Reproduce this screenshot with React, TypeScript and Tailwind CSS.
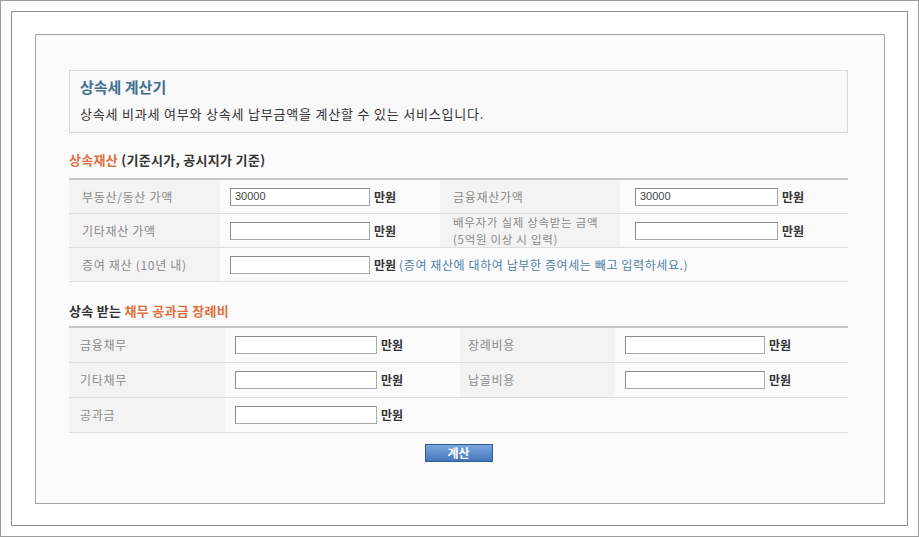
import React from 'react';

const font = { fontFamily: '"Noto Sans CJK KR", "Noto Sans", sans-serif' };

function Field({ value = '', w }: { value?: string; w: string }) {
  return (
    <div
      className={`${w} h-[18px] bg-white border border-[#a9a9a9] border-t-[#8c8c8c] border-l-[#8c8c8c] px-[4px] flex items-center text-[11px] tracking-normal text-[#444] font-['Liberation_Sans',sans-serif]`}
    >
      {value}
    </div>
  );
}

function Unit() {
  return <span className="text-[12px] font-bold text-[#333] ml-[4px] tracking-normal">만원</span>;
}

export default function App() {
  return (
    <div className="w-[919px] h-[537px] bg-white" style={font}>
      <div className="h-full border border-[#9c9c9c] p-[10px]">
        <div className="h-full border border-[#8e8e8e] bg-white pt-[22px] pl-[23px] pr-[22px] pb-[21px]">
          <div className="h-full border border-[#a3a3a3] bg-[#fbfbfb] pt-[35px] pl-[33px] pr-[36px]">
            {/* header */}
            <div className="h-[63px] border border-[#d9d9d9] bg-[#f9f9f9] pl-[10px] pt-[6px]">
              <h1 className="text-[15px] font-bold text-[#3f6f91] leading-[20px]">상속세 계산기</h1>
              <p className="text-[13px] tracking-[0.8px] text-[#333] leading-[18px] mt-[8px]">
                상속세 비과세 여부와 상속세 납부금액을 계산할 수 있는 서비스입니다.
              </p>
            </div>

            {/* section 1 */}
            <div className="mt-[19px] text-[13px] tracking-[0.3px] font-bold leading-[16px] text-[#333]">
              <span className="text-[#e0703f]">상속재산</span> (기준시가, 공시지가 기준)
            </div>
            <div className="mt-[10px] border-t-2 border-[#c6c6c6] text-[12px] tracking-[0.7px] text-[#8a8a8a]">
              <div className="flex h-[34px] border-b border-[#dedede]">
                <div className="w-[151px] bg-[#f3f3f3] pl-[13px] flex items-center">부동산/동산 가액</div>
                <div className="w-[220px] pl-[10px] flex items-center">
                  <Field w="w-[140px]" value="30000" />
                  <Unit />
                </div>
                <div className="w-[180px] bg-[#f3f3f3] pl-[13px] flex items-center">금융재산가액</div>
                <div className="flex-1 pl-[15px] flex items-center">
                  <Field w="w-[143px]" value="30000" />
                  <Unit />
                </div>
              </div>
              <div className="flex h-[34px] border-b border-[#dedede]">
                <div className="w-[151px] bg-[#f3f3f3] pl-[13px] flex items-center">기타재산 가액</div>
                <div className="w-[220px] pl-[10px] flex items-center">
                  <Field w="w-[140px]" />
                  <Unit />
                </div>
                <div className="w-[180px] bg-[#f3f3f3] pl-[13px] flex flex-col justify-center text-[11.5px] leading-[16.5px]">
                  <span>배우자가 실제 상속받는 금액</span>
                  <span>(5억원 이상 시 입력)</span>
                </div>
                <div className="flex-1 pl-[15px] flex items-center">
                  <Field w="w-[143px]" />
                  <Unit />
                </div>
              </div>
              <div className="flex h-[34px] border-b border-[#dedede]">
                <div className="w-[151px] bg-[#f3f3f3] pl-[13px] flex items-center">증여 재산 (10년 내)</div>
                <div className="flex-1 pl-[10px] flex items-center">
                  <Field w="w-[140px]" />
                  <Unit />
                  <span className="ml-[3px] text-[12px] tracking-[0.6px] text-[#4c80a8]">
                    (증여 재산에 대하여 납부한 증여세는 빼고 입력하세요.)
                  </span>
                </div>
              </div>
            </div>

            {/* section 2 */}
            <div className="mt-[21px] text-[13px] tracking-[0.3px] font-bold leading-[16px] text-[#333]">
              상속 받는 <span className="text-[#e0703f]">채무 공과금 장례비</span>
            </div>
            <div className="mt-[7px] border-t-2 border-[#c6c6c6] text-[12px] tracking-[0.7px] text-[#8a8a8a]">
              <div className="flex h-[35px] border-b border-[#dedede]">
                <div className="w-[156px] bg-[#f3f3f3] pl-[11px] flex items-center">금융채무</div>
                <div className="w-[235px] pl-[10px] flex items-center">
                  <Field w="w-[142px]" />
                  <Unit />
                </div>
                <div className="w-[155px] bg-[#f3f3f3] pl-[8px] flex items-center">장례비용</div>
                <div className="flex-1 pl-[10px] flex items-center">
                  <Field w="w-[140px]" />
                  <Unit />
                </div>
              </div>
              <div className="flex h-[35px] border-b border-[#dedede]">
                <div className="w-[156px] bg-[#f3f3f3] pl-[11px] flex items-center">기타채무</div>
                <div className="w-[235px] pl-[10px] flex items-center">
                  <Field w="w-[142px]" />
                  <Unit />
                </div>
                <div className="w-[155px] bg-[#f3f3f3] pl-[8px] flex items-center">납골비용</div>
                <div className="flex-1 pl-[10px] flex items-center">
                  <Field w="w-[140px]" />
                  <Unit />
                </div>
              </div>
              <div className="flex h-[35px] border-b border-[#dedede]">
                <div className="w-[156px] bg-[#f3f3f3] pl-[11px] flex items-center">공과금</div>
                <div className="flex-1 pl-[10px] flex items-center">
                  <Field w="w-[142px]" />
                  <Unit />
                </div>
              </div>
            </div>

            <div className="mt-[11px] flex justify-center">
              <button className="w-[68px] h-[18px] border border-[#2f5b94] bg-gradient-to-b from-[#79a6dd] to-[#4576ba] text-white text-[12px] font-bold leading-none flex items-center justify-center">
                계산
              </button>
            </div>
          </div>
        </div>
      </div>
    </div>
  );
}
